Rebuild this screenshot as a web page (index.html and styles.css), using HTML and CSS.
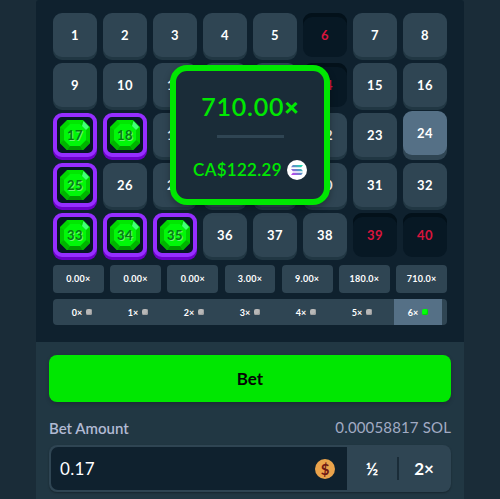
FILE: index.html
```html
<!DOCTYPE html>
<html lang="en">
<head>
    <meta charset="UTF-8">
    <meta name="viewport" content="width=device-width, initial-scale=1.0">
    <title>Keno</title>
    <link rel="stylesheet" href="styles.css">
</head>
<body>

<!-- Shared gem shape -->
<svg class="sprite" width="0" height="0">
    <symbol id="gem" viewBox="0 0 30 30">
        <path fill="#00d600" d="M7 0h16l7 7v16l-7 7H7l-7-7V7z"/>
        <path fill="#00e701" d="M7 0h16l-3 4H10z"/>
        <path fill="#00c800" d="M0 7l4 3v10l-4 3z"/>
        <path fill="#00d000" d="M30 7l-4 3v10l4 3z"/>
        <path fill="#009a00" d="M7 30h16l-3-4H10z"/>
        <path fill="#00b400" d="M0 23l4-3 6 6-3 4zM30 23l-4-3-6 6 3 4z"/>
        <path fill="#00f808" d="M10 4h10l6 6v10l-6 6H10l-6-6V10z"/>
        <path fill="#42ff78" d="M23.500 1l5.500 6-3 3-4-4z"/>
    </symbol>
</svg>

<div class="game">
    <div class="board">
        <div id="tiles" class="tiles"></div>

        <div class="payouts">
            <div>0.00×</div>
            <div>0.00×</div>
            <div>0.00×</div>
            <div>3.00×</div>
            <div>9.00×</div>
            <div>180.0×</div>
            <div>710.0×</div>
        </div>

        <div class="hits">
            <div class="hit">0×<i></i></div>
            <div class="hit">1×<i></i></div>
            <div class="hit">2×<i></i></div>
            <div class="hit">3×<i></i></div>
            <div class="hit">4×<i></i></div>
            <div class="hit">5×<i></i></div>
            <div class="hit active">6×<i></i></div>
        </div>

        <!-- Win popup -->
        <div class="win">
            <div class="multiplier">710.00<b>×</b></div>
            <div class="divider"></div>
            <div class="amount">
                <span>CA$122.29</span>
                <svg width="20" height="20" viewBox="0 0 20 20">
                    <defs>
                        <linearGradient id="sol" gradientUnits="userSpaceOnUse" x1="15" y1="5" x2="5" y2="15">
                            <stop offset="0" stop-color="#19e6ad"/>
                            <stop offset=".5" stop-color="#628bc9"/>
                            <stop offset="1" stop-color="#c93df0"/>
                        </linearGradient>
                    </defs>
                    <circle cx="10" cy="10" r="10" fill="#fff"/>
                    <path fill="url(#sol)" d="M5.800 5h10.200l-1.800 2.300H4zM4 8.900h10.200l1.800 2.300H5.800zM5.800 12.800h10.200l-1.800 2.300H4z"/>
                </svg>
            </div>
        </div>
    </div>

    <div class="controls">
        <button class="bet">Bet</button>
        <div class="labels">
            <span class="name">Bet Amount</span>
            <span class="converted">0.00058817 SOL</span>
        </div>
        <div class="stake">
            <div class="field">
                <span>0.17</span>
                <span class="coin">$</span>
            </div>
            <button class="half">½</button>
            <button class="double">2×</button>
        </div>
    </div>
</div>

<script>
    const hits = [17, 18, 25, 33, 34, 35];
    const misses = [6, 14, 39, 40];
    const hovered = 24;
    const tiles = document.getElementById('tiles');

    for (let i = 1; i <= 40; i++) {
        const tile = document.createElement('div');
        tile.className = 'tile';
        if (hits.includes(i)) {
            tile.classList.add('gem');
            tile.innerHTML = '<svg width="30" height="30"><use href="#gem"/></svg>';
        }
        if (misses.includes(i)) tile.classList.add('miss');
        if (i === hovered) tile.classList.add('hovered');
        const number = document.createElement('span');
        number.textContent = i;
        tile.appendChild(number);
        tiles.appendChild(tile);
    }
</script>

</body>
</html>
```

FILE: styles.css
```css
* {
    box-sizing: border-box;
}
body {
    margin: 0;
    height: 499px;
    overflow: hidden;
    background: #1a2c38;
    color: #fff;
    font-family: Lato, "Open Sans", sans-serif;
}
button {
    border: none;
    padding: 0;
    color: #fff;
    font-family: inherit;
}
.sprite {
    position: absolute;
}
.game {
    width: 428px;
    margin: 0 auto;
}
.board {
    position: relative;
    height: 342px;
    padding: 13px 17px 0;
    background: #0f212e;
    border-top-left-radius: 3px;
    border-top-right-radius: 3px;
}
.tiles {
    display: grid;
    grid-template-columns: repeat(8, 44px);
    grid-auto-rows: 44px;
    gap: 6px;
}
.tile {
    display: grid;
    place-items: center;
    border-radius: 9px;
    background: #2f4553;
    box-shadow: 0 3px 0 #213743;
    font-size: 13px;
    font-weight: 700;
    letter-spacing: .5px;
}
.tile span,
.tile svg {
    grid-area: 1 / 1;
}
.tile.gem {
    border: 4px solid #962eff;
    background: #071824;
    box-shadow: 0 3px 0 #6c00c8;
}
.tile.gem span {
    z-index: 1;
    color: #087a12;
    text-shadow: 1px 1px 0 #66f66b;
}
.tile.miss {
    background: #071824;
    box-shadow: inset 0 4px 0 #03111a;
    color: #d9143c;
}
.tile.hovered {
    background: #557086;
    box-shadow: 0 5px 0 #2f4553;
    transform: translateY(-2px);
}
.payouts {
    display: grid;
    grid-template-columns: repeat(7, 1fr);
    gap: 6.5px;
    margin-top: 8px;
}
.payouts div {
    height: 28px;
    border-radius: 4px;
    background: #2f4553;
    font-size: 9px;
    font-weight: 700;
    line-height: 28px;
    text-align: center;
    letter-spacing: .25px;
}
.hits {
    display: flex;
    justify-content: space-between;
    height: 26px;
    margin-top: 6px;
    padding: 0 5px;
    border-radius: 4px;
    background: #2f4553;
}
.hit {
    display: flex;
    align-items: center;
    justify-content: center;
    gap: 4px;
    width: 48px;
    font-size: 9px;
    font-weight: 700;
}
.hit i {
    width: 6px;
    height: 6px;
    border-radius: 2px;
    background: #b8b8b8;
    box-shadow: inset -1px -1px 0 #a0a0a0;
}
.hit.active {
    background: #557086;
}
.hit.active i {
    background: #00ff0a;
    box-shadow: inset -1px -1px 0 #00d800;
}
.win {
    position: absolute;
    top: 65px;
    left: 134px;
    z-index: 2;
    display: flex;
    flex-direction: column;
    align-items: center;
    width: 160px;
    height: 140px;
    padding-top: 19px;
    border: 6px solid #00e701;
    border-radius: 17px;
    background: #1a2c38;
    box-shadow: 0 3px 7px rgba(0, 0, 0, .3);
    color: #00e701;
}
.multiplier {
    font-size: 25px;
    font-weight: 600;
    line-height: 32px;
    letter-spacing: .8px;
}
.multiplier b {
    font-weight: 800;
    letter-spacing: 0;
}
.divider {
    width: 67px;
    height: 3px;
    margin-top: 13px;
    background: #2f4553;
}
.amount {
    display: flex;
    align-items: center;
    gap: 5px;
    margin-top: 22px;
    font-size: 17px;
    font-weight: 600;
    line-height: 20px;
    letter-spacing: .3px;
}
.controls {
    height: 157px;
    padding: 13px 13px 0;
    background: #213743;
}
.bet {
    display: block;
    width: 100%;
    height: 47px;
    border-radius: 8px;
    background: #00e701;
    box-shadow: 0 2px 4px rgba(0, 0, 0, .2);
    color: #050805;
    font-size: 17px;
    font-weight: 700;
}
.labels {
    display: flex;
    justify-content: space-between;
    height: 20px;
    margin-top: 16px;
    color: #b1bad3;
    font-size: 15px;
    line-height: 20px;
}
.labels .name {
    font-weight: 600;
}
.labels .converted {
    margin-top: -1px;
    color: #a1abc4;
    letter-spacing: .15px;
}
.stake {
    display: flex;
    align-items: center;
    height: 47px;
    margin-top: 7px;
    padding: 2px;
    border-radius: 8px;
    background: #2f4553;
    box-shadow: 0 1px 2px rgba(0, 0, 0, .3);
}
.field {
    display: flex;
    align-items: center;
    justify-content: space-between;
    width: 296px;
    height: 43px;
    padding: 0 12px 0 9px;
    border-radius: 7px 0 0 7px;
    background: #0f212e;
    font-size: 17px;
    letter-spacing: .3px;
}
.coin {
    width: 20px;
    height: 20px;
    border-radius: 50%;
    background: #eaa34b;
    color: #6e1714;
    font-size: 15px;
    font-weight: 700;
    line-height: 20px;
    text-align: center;
    letter-spacing: 0;
}
.half,
.double {
    flex: 1;
    height: 23px;
    background: none;
    font-size: 17px;
    font-weight: 700;
    line-height: 23px;
}
.half {
    border-right: 2px solid #1a2c38;
}
```
